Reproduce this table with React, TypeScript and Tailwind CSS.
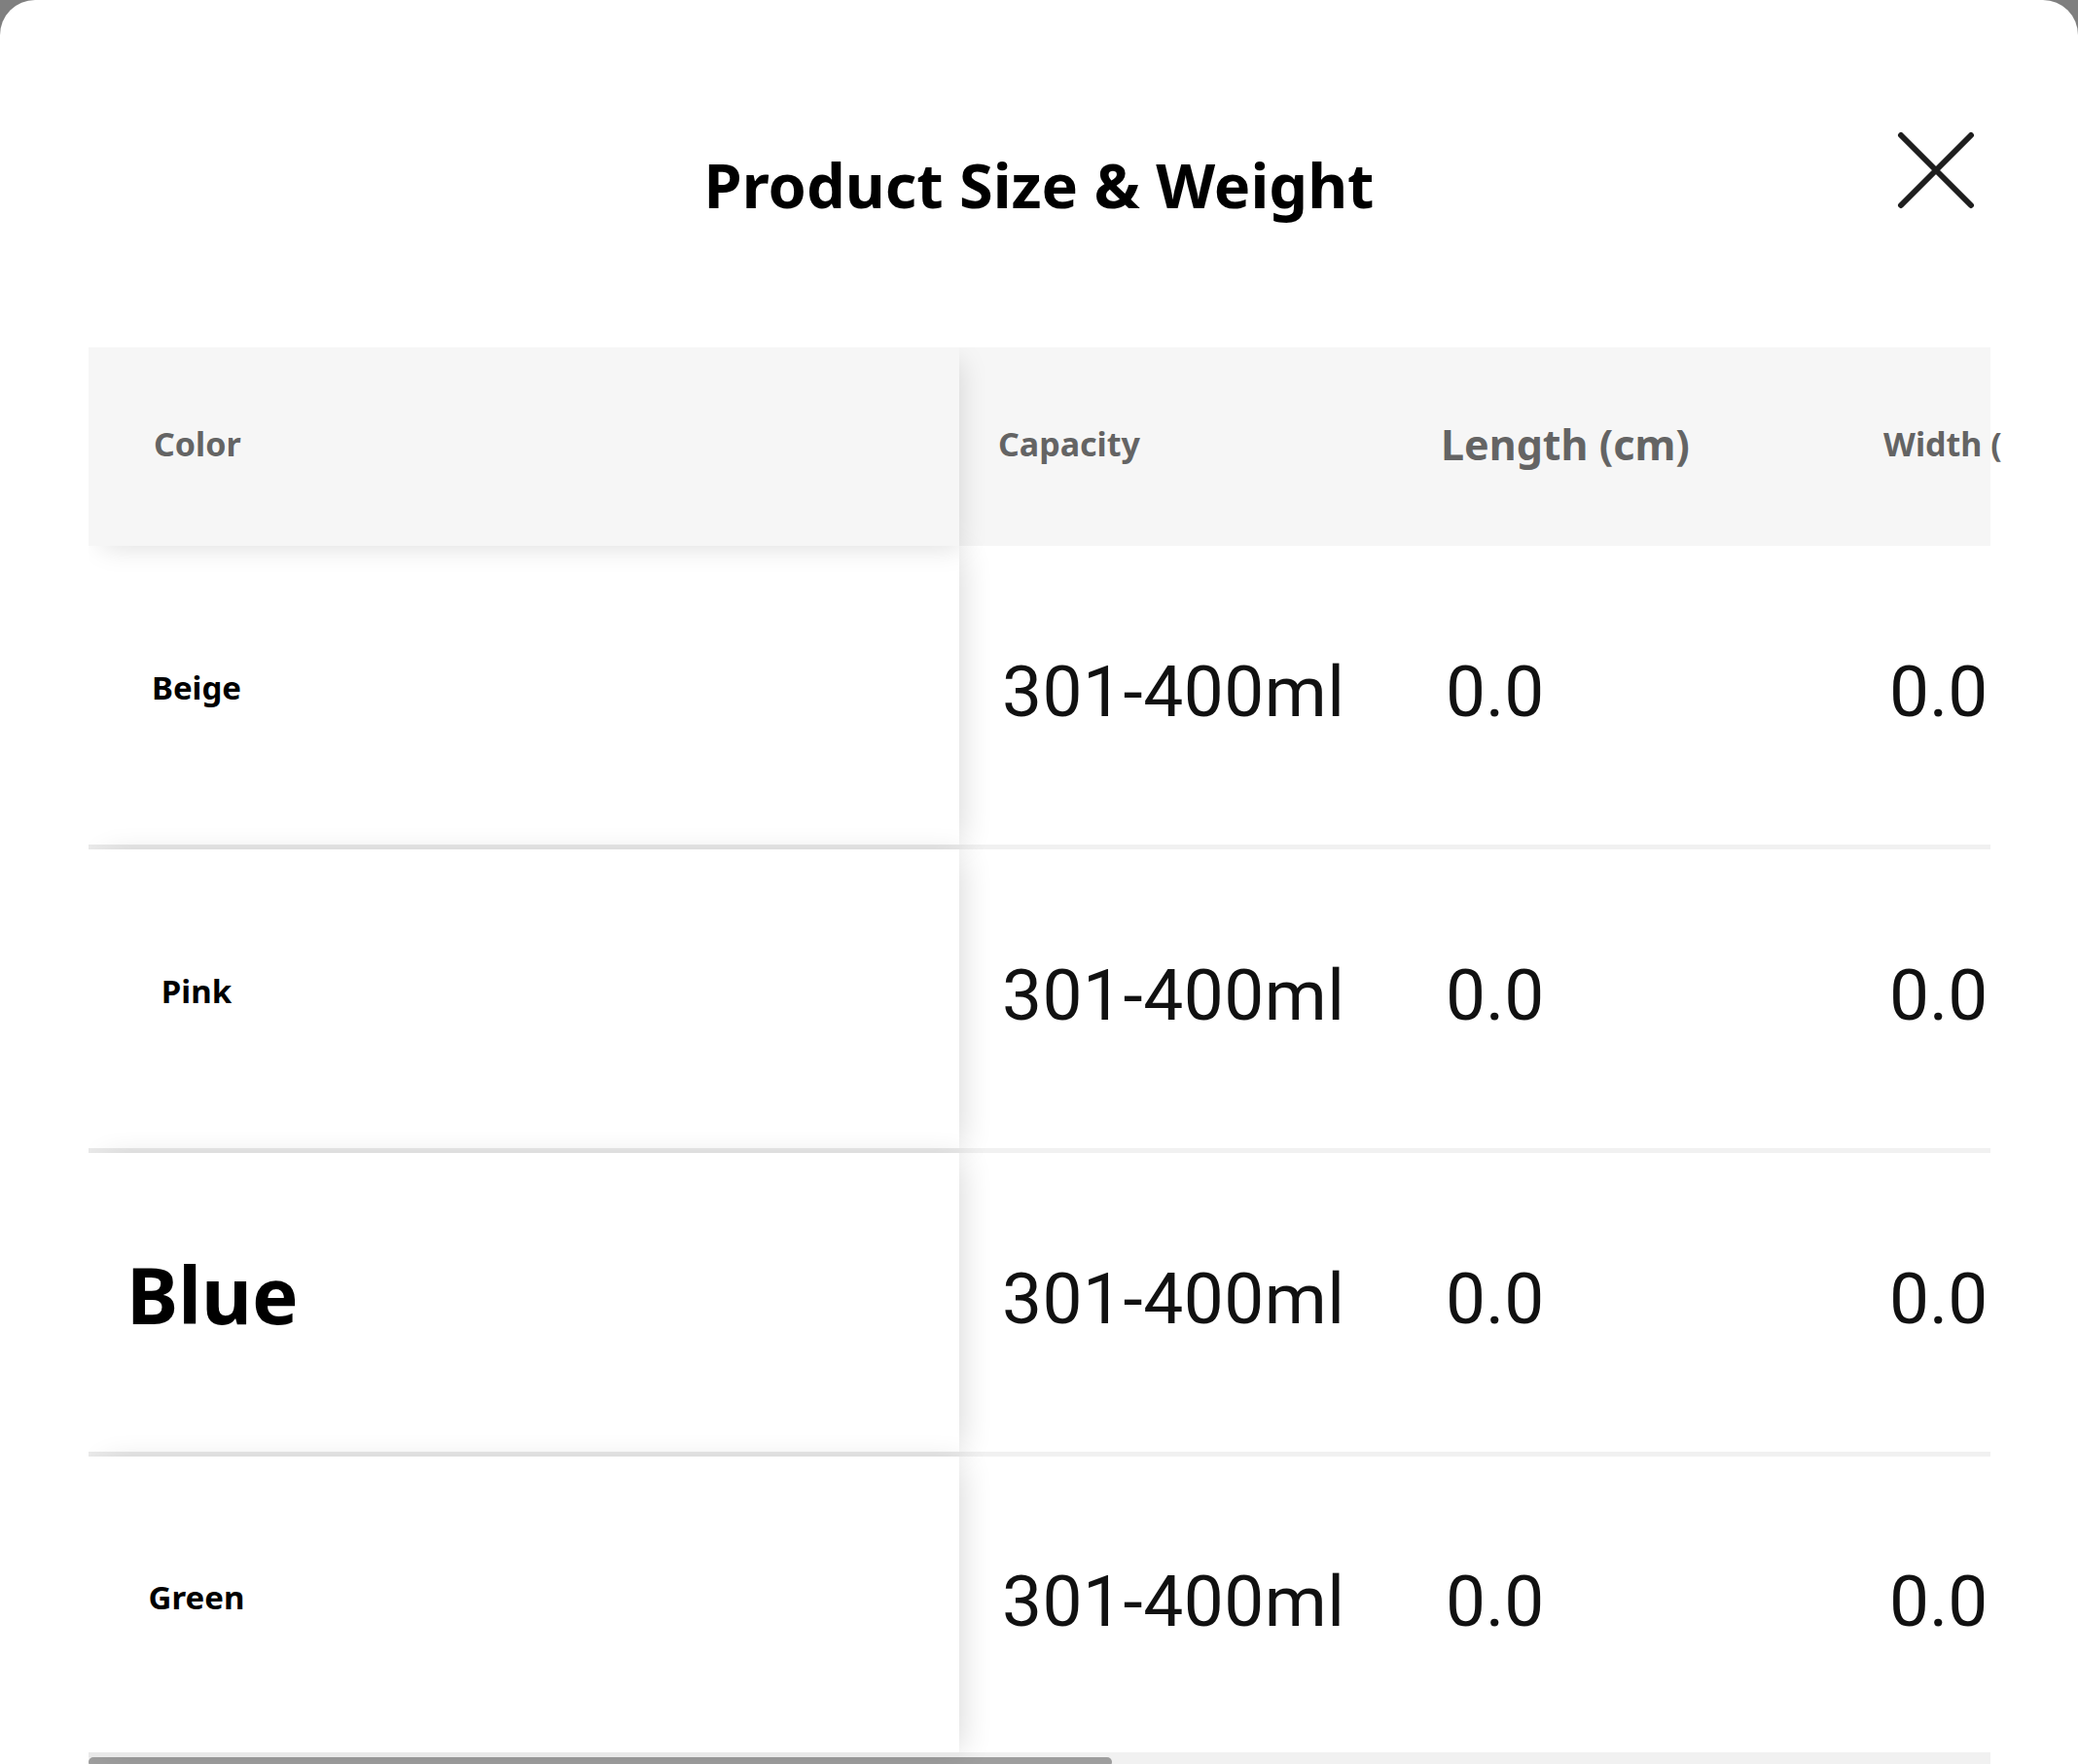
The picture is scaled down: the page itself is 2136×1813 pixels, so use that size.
import React from "react";

type Row = { color: string; big: boolean; h: string };

const rows: Row[] = [
  { color: "Beige", big: false, h: "h-[312px]" },
  { color: "Pink", big: false, h: "h-[312px]" },
  { color: "Blue", big: true, h: "h-[312px]" },
  { color: "Green", big: false, h: "h-[309px]" },
];

function CloseIcon() {
  return (
    <svg width="80" height="80" viewBox="0 0 80 80" fill="none">
      <path
        d="M4 4 L76 76 M76 4 L4 76"
        stroke="#1e1e1e"
        strokeWidth="6"
        strokeLinecap="round"
      />
    </svg>
  );
}

export default function App() {
  return (
    <div className="h-[1813px] w-[2136px] overflow-hidden bg-[#7f7f7f]">
      <div className="relative h-full rounded-t-[36px] bg-white pt-[158px]">
        <h1 className="text-center font-['Noto_Sans',sans-serif] text-[63px] font-bold leading-none text-black">
          Product Size &amp; Weight
        </h1>
        <button
          aria-label="Close"
          className="absolute left-[1950px] top-[135px] flex h-[80px] w-[80px] items-center justify-center"
        >
          <CloseIcon />
        </button>

        <div className="ml-[91px] mt-[136px] w-[1967px] overflow-hidden">
          <div className="w-[1955px]">
            {/* header */}
            <div className="flex h-[204px] bg-[#f6f6f6] font-['Noto_Sans',sans-serif] font-bold text-[#646464]">
              <div className="relative z-20 flex w-[895px] shrink-0 items-center bg-[#f6f6f6] pb-[6px] pl-[67px] text-[34px] leading-none shadow-[8px_8px_26px_-6px_rgba(0,0,0,0.13)]">
                Color
              </div>
              <div className="flex w-[456px] shrink-0 items-center pb-[6px] pl-[40px] text-[34px] leading-none">
                Capacity
              </div>
              <div className="flex w-[453px] shrink-0 items-center pb-[6px] pl-[39px] text-[43px] leading-none">
                Length (cm)
              </div>
              <div className="flex w-[151px] shrink-0 items-center whitespace-nowrap pb-[6px] pl-[41px] text-[34px] leading-none">
                Width (cm)
              </div>
            </div>

            {/* body */}
            {rows.map((r) => (
              <div key={r.color} className={`flex ${r.h}`}>
                <div className="relative z-10 flex w-[895px] shrink-0 items-center border-b-[5px] border-[#e9e9e9] bg-white pl-[22px] shadow-[10px_0_30px_-8px_rgba(0,0,0,0.16)]">
                  {r.big ? (
                    <div className="mb-[18px] flex h-[112px] w-[178px] items-center whitespace-nowrap pl-[17px] font-['Noto_Sans',sans-serif] text-[80px] font-bold leading-none text-black">
                      {r.color}
                    </div>
                  ) : (
                    <div className="mb-[16px] flex h-[112px] w-[178px] items-center justify-center font-['Noto_Sans',sans-serif] text-[33px] font-bold leading-none text-black">
                      {r.color}
                    </div>
                  )}
                </div>
                <div className="flex w-[456px] shrink-0 items-center border-b-[5px] border-[#f1f1f1] pb-[6px] pl-[44px] font-['Roboto',sans-serif] text-[73px] leading-none tracking-[0.5px] text-[#111111]">
                  301-400ml
                </div>
                <div className="flex w-[453px] shrink-0 items-center border-b-[5px] border-[#f1f1f1] pb-[6px] pl-[44px] font-['Roboto',sans-serif] text-[73px] leading-none text-[#111111]">
                  0.0
                </div>
                <div className="flex w-[151px] shrink-0 items-center border-b-[5px] border-[#f1f1f1] pb-[6px] pl-[47px] font-['Roboto',sans-serif] text-[73px] leading-none text-[#111111]">
                  0.0
                </div>
              </div>
            ))}

            {/* scrollbar */}
            <div className="h-[10px] w-[1955px] bg-[#f1f1f1]">
              <div className="h-full w-[1052px] rounded-full bg-[#9e9e9e]" />
            </div>
          </div>
        </div>
      </div>
    </div>
  );
}
